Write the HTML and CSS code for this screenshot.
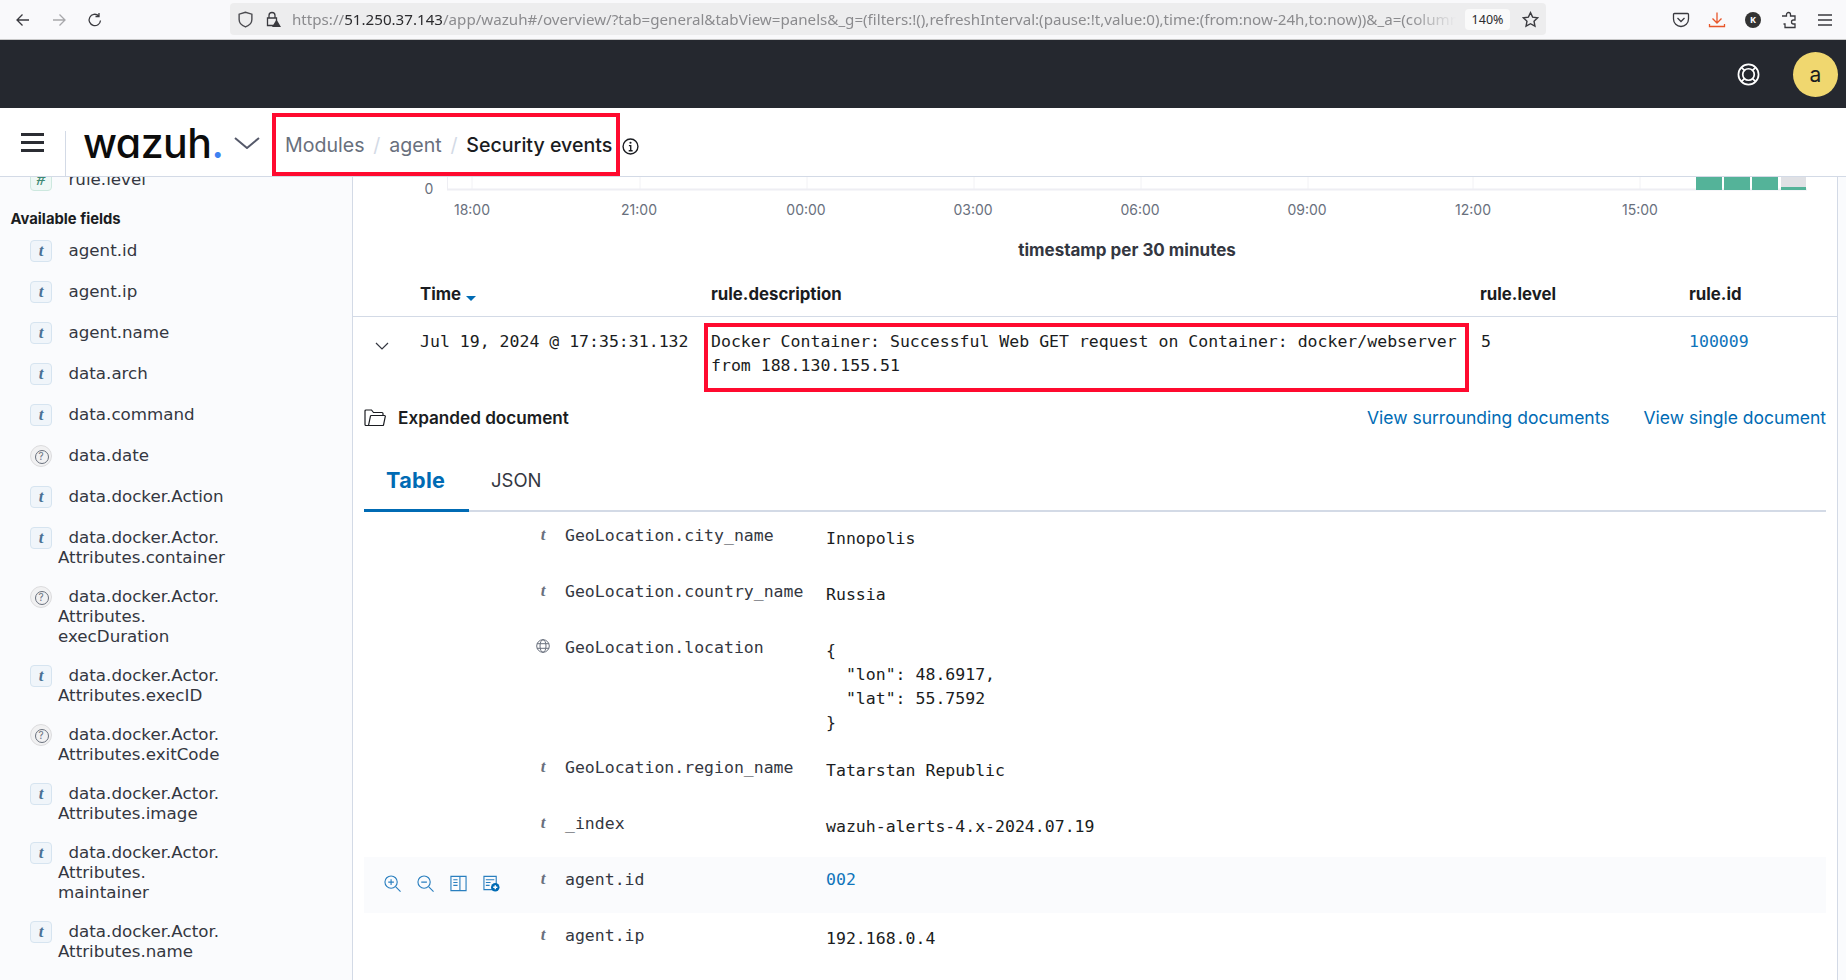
FILE: index.html
```html
<!DOCTYPE html>
<html lang="en">
<head>
<meta charset="utf-8">
<title>Wazuh - Security events</title>
<link rel="stylesheet" href="styles.css">
</head>
<body>
<div class="browser">
  <div class="browser-nav">
    <svg class="bi" viewBox="0 0 16 16"><path d="M14 8H2.5M7.5 2.5 2 8l5.500 5.500"/></svg>
    <svg class="bi dim" viewBox="0 0 16 16"><path d="M2 8h11.500M8.500 2.500 14 8l-5.500 5.500"/></svg>
    <svg class="bi" viewBox="0 0 16 16"><path d="M13.500 8.500A5.700 5.700 0 1 1 11.500 3.600M12 1v3.500H8.500"/></svg>
  </div>
  <div class="urlbar">
    <svg class="bi shield" viewBox="0 0 16 16"><path d="M8 1.200 2 3v5c0 3.500 2.800 5.800 6 7 3.200-1.200 6-3.500 6-7V3z"/></svg>
    <svg class="bi lock" viewBox="0 0 16 16"><path d="M4 7V4.500a3 3 0 0 1 6 0V7M2.500 7h9v7.500h-9z"/><path class="warn" d="M11.500 8.500 16 16H7z"/></svg>
    <div class="url"><span>https://</span><b>51.250.37.143</b><span>/app/wazuh#/overview/?tab=general&amp;tabView=panels&amp;_g=(filters:!(),refreshInterval:(pause:!t,value:0),time:(from:now-24h,to:now))&amp;_a=(columns</span></div>
    <div class="zoompill">140%</div>
    <svg class="bi star" viewBox="0 0 16 16"><path d="m8 1.500 2 4.300 4.700.6-3.400 3.200.9 4.700L8 12l-4.200 2.300.9-4.700L1.300 6.400 6 5.800z"/></svg>
  </div>
  <div class="browser-tools">
    <svg class="bi" viewBox="0 0 18 18"><path d="M2.500 2.500h13a1 1 0 0 1 1 1V8a7.500 7.500 0 0 1-15 0V3.500a1 1 0 0 1 1-1z"/><path d="m5.500 7 3.500 3.500L12.500 7"/></svg>
    <svg class="bi orange" viewBox="0 0 18 18"><path d="M9 1.500V12M4.500 7.500 9 12l4.500-4.500M1.500 13v2.500h15V13"/></svg>
    <div class="kbadge">K</div>
    <svg class="bi" viewBox="0 0 18 18"><path d="M2 5h4.500V3.500a2 2 0 0 1 4 0V5H15v4h-1.500a2 2 0 0 0 0 4H15v3.500H5V13H3.500"/></svg>
    <svg class="bi" viewBox="0 0 18 18"><path d="M2 4h14M2 9h14M2 14h14"/></svg>
  </div>
</div>

<header class="darkbar">
  <svg class="buoy" viewBox="0 0 24 24"><circle cx="12" cy="12" r="10.500"/><circle cx="12" cy="12" r="6"/><path d="m4.500 4.500 3.300 3.300M19.500 4.500l-3.300 3.300M4.500 19.500l3.300-3.300M19.500 19.500l-3.300-3.300"/></svg>
  <div class="avatar">a</div>
</header>

<nav class="appnav">
  <div class="menu-toggle"><span></span><span></span><span></span></div>
  <div class="logo">wazuh<i>.</i></div>
  <svg class="logo-chev" viewBox="0 0 26 12"><path d="M1 1l12 10L25 1"/></svg>
  <div class="crumbs">
    <span>Modules</span><em>/</em><span>agent</span><em>/</em><strong>Security events</strong>
  </div>
  <svg class="info" viewBox="0 0 16 16"><circle cx="8" cy="8" r="7"/><path d="M6.500 7.200H8.200V12M6.300 12h3.700"/><circle class="dot" cx="8" cy="4.500" r="1"/></svg>
</nav>

<div class="workspace">
  <aside class="sidebar">
    <div class="fields">
      <div class="field"><span class="ico num">#</span><span class="fname">rule.level</span></div>
      <h3 class="fields-title">Available fields</h3>
      <div class="field"><span class="ico str">t</span><span class="fname">agent.id</span></div>
      <div class="field"><span class="ico str">t</span><span class="fname">agent.ip</span></div>
      <div class="field"><span class="ico str">t</span><span class="fname">agent.name</span></div>
      <div class="field"><span class="ico str">t</span><span class="fname">data.arch</span></div>
      <div class="field"><span class="ico str">t</span><span class="fname">data.command</span></div>
      <div class="field"><span class="ico unk">?</span><span class="fname">data.date</span></div>
      <div class="field"><span class="ico str">t</span><span class="fname">data.docker.Action</span></div>
      <div class="field"><span class="ico str">t</span><span class="fname">data.docker.Actor.<br>Attributes.container</span></div>
      <div class="field"><span class="ico unk">?</span><span class="fname">data.docker.Actor.<br>Attributes.<br>execDuration</span></div>
      <div class="field"><span class="ico str">t</span><span class="fname">data.docker.Actor.<br>Attributes.execID</span></div>
      <div class="field"><span class="ico unk">?</span><span class="fname">data.docker.Actor.<br>Attributes.exitCode</span></div>
      <div class="field"><span class="ico str">t</span><span class="fname">data.docker.Actor.<br>Attributes.image</span></div>
      <div class="field"><span class="ico str">t</span><span class="fname">data.docker.Actor.<br>Attributes.<br>maintainer</span></div>
      <div class="field"><span class="ico str">t</span><span class="fname">data.docker.Actor.<br>Attributes.name</span></div>
      <div class="field"><span class="ico unk">?</span><span class="fname"></span></div>
    </div>
  </aside>

  <main class="main">
    <svg class="chart" viewBox="0 0 1484 85" width="1484" height="85">
      <path class="grid" d="M119 0v12M287 0v12M454 0v12M621 0v12M788 0v12M955 0v12M1120 0v12M1287 0v12"/>
      <path class="axis-y" d="M94.500 0v13"/>
      <path class="axis" d="M94 12.500h1360"/>
      <g class="bars">
        <rect x="1343" y="0" width="26" height="13"/>
        <rect x="1371" y="0" width="26" height="13"/>
        <rect x="1399" y="0" width="26" height="13"/>
        <rect class="barmute" x="1428" y="0" width="25" height="10"/>
        <rect x="1428" y="10" width="25" height="3"/>
      </g>
      <text class="tick" x="76" y="17" text-anchor="middle">0</text>
      <g class="ticks" text-anchor="middle">
        <text class="tick" x="119" y="38">18:00</text>
        <text class="tick" x="286" y="38">21:00</text>
        <text class="tick" x="453" y="38">00:00</text>
        <text class="tick" x="620" y="38">03:00</text>
        <text class="tick" x="787" y="38">06:00</text>
        <text class="tick" x="954" y="38">09:00</text>
        <text class="tick" x="1120" y="38">12:00</text>
        <text class="tick" x="1287" y="38">15:00</text>
      </g>
      <text class="axis-title" x="774" y="79" text-anchor="middle">timestamp per 30 minutes</text>
    </svg>

    <div class="thead">
      <div class="th">Time <span class="sort"></span></div>
      <div class="th">rule.description</div>
      <div class="th">rule.level</div>
      <div class="th">rule.id</div>
    </div>
    <div class="trow">
      <svg class="row-chev" viewBox="0 0 14 8"><path d="m1 1 6 6 6-6"/></svg>
      <div class="mono">Jul 19, 2024 @ 17:35:31.132</div>
      <div class="mono descbox">Docker Container: Successful Web GET request on Container: docker/webserver from 188.130.155.51</div>
      <div class="mono">5</div>
      <div class="mono link">100009</div>
    </div>

    <section class="doc">
      <div class="doc-head">
        <svg class="folder" viewBox="0 0 22 18"><path d="M4.500 16.500H2a1 1 0 0 1-1-1V2a1 1 0 0 1 1-1h5.500l2 2.500H18a1 1 0 0 1 1 1V6.500M4.500 16.500 6.500 7a.8.800 0 0 1 .8-.5H20.500a.8.800 0 0 1 .8 1L19.500 16a.8.800 0 0 1-.8.500z"/></svg>
        <strong class="doc-title">Expanded document</strong>
        <a class="doc-link">View surrounding documents</a>
        <a class="doc-link">View single document</a>
      </div>
      <div class="tabs">
        <div class="tab active">Table</div>
        <div class="tab">JSON</div>
      </div>
      <div class="kv">
        <div class="actions"></div><div class="type">t</div><div class="key">GeoLocation.city_name</div><div class="val">Innopolis</div>
      </div>
      <div class="kv">
        <div class="actions"></div><div class="type">t</div><div class="key">GeoLocation.country_name</div><div class="val">Russia</div>
      </div>
      <div class="kv tall">
        <div class="actions"></div>
        <div class="type"><svg class="globe" viewBox="0 0 14 14"><circle cx="7" cy="7" r="6.300"/><ellipse cx="7" cy="7" rx="3" ry="6.300"/><path d="M1 4.700h12M1 9.300h12"/></svg></div>
        <div class="key">GeoLocation.location</div>
        <div class="val"><pre class="json">{
  "lon": 48.6917,
  "lat": 55.7592
}</pre></div>
      </div>
      <div class="kv">
        <div class="actions"></div><div class="type">t</div><div class="key">GeoLocation.region_name</div><div class="val">Tatarstan Republic</div>
      </div>
      <div class="kv">
        <div class="actions"></div><div class="type">t</div><div class="key">_index</div><div class="val">wazuh-alerts-4.x-2024.07.19</div>
      </div>
      <div class="kv hover">
        <div class="actions">
          <svg class="act" viewBox="0 0 18 18"><circle cx="7.500" cy="7.500" r="6.500"/><path d="m12.500 12.500 5 5M7.500 4.500v6M4.500 7.500h6"/></svg>
          <svg class="act" viewBox="0 0 18 18"><circle cx="7.500" cy="7.500" r="6.500"/><path d="m12.500 12.500 5 5M4.500 7.500h6"/></svg>
          <svg class="act" viewBox="0 0 18 18"><path d="M1 1.500h16v15H1zM10.500 1.500v15M3.500 5h4.500M3.500 8h4.500M3.500 11h4.500"/></svg>
          <svg class="act" viewBox="0 0 18 18"><path d="M1 1.500h13v14H1zM3 5h9M3 8h5M3 11h4"/><circle class="fillc" cx="13" cy="13" r="4.500"/><path class="plus" d="M13 10.800v4.400M10.800 13h4.400"/></svg>
        </div>
        <div class="type">t</div><div class="key">agent.id</div><div class="val link">002</div>
      </div>
      <div class="kv">
        <div class="actions"></div><div class="type">t</div><div class="key">agent.ip</div><div class="val">192.168.0.4</div>
      </div>
    </section>
  </main>
</div>
</body>
</html>
```

FILE: styles.css
```css
* { box-sizing: border-box; }
html, body { margin: 0; padding: 0; height: 100%; overflow: hidden; background: #fff; }
body { font-family: "Inter", "Liberation Sans", sans-serif; color: #1a1c21; }

/* browser chrome */
.browser { height: 40px; background: #f9f9fb; border-bottom: 1px solid #c8c8c8; display: flex; align-items: center; }
.bi { width: 16px; height: 16px; fill: none; stroke: #3a3a3f; stroke-width: 1.3; flex: none; }
.bi.dim { stroke: #a8a8ab; }
.bi.orange { stroke: #e8562a; }
.browser-nav { display: flex; gap: 20px; padding-left: 15px; width: 230px; flex: none; }
.urlbar { width: 1316px; height: 32px; flex: none; margin-top: -1px; background: #ededee; border-radius: 4px; display: flex; align-items: center; padding-left: 7px; }
.urlbar .shield { stroke: #4a4a4f; width: 17px; height: 17px; }
.urlbar .lock { margin-left: 11px; }
.lock .warn { fill: #3a3a3f; stroke: none; }
.url { margin-left: 11px; width: 1164px; flex: none; white-space: nowrap; overflow: hidden; font-family: "Noto Sans", sans-serif; font-size: 15.150px; color: #8b8b8e; -webkit-mask-image: linear-gradient(to right, #000 96%, transparent); mask-image: linear-gradient(to right, #000 96%, transparent); }
.url b { font-weight: 400; color: #2b2b2e; }
.zoompill { margin-left: 9px; width: 45px; height: 21px; flex: none; background: #fafafa; border-radius: 4px; font-family: "Noto Sans", sans-serif; font-size: 12.500px; line-height: 21px; text-align: center; color: #2b2b2e; }
.urlbar .star { margin-left: 12px; width: 17px; height: 17px; }
.browser-tools { display: flex; align-items: center; gap: 18px; margin-left: 126px; }
.browser-tools .bi { width: 18px; height: 18px; }
.kbadge { width: 16px; height: 16px; margin: 0 1px; flex: none; border-radius: 50%; background: #333; color: #fff; font: 700 9px/16px "Noto Sans", sans-serif; text-align: center; }

/* dark header */
.darkbar { height: 68px; background: #25282f; display: flex; align-items: center; justify-content: flex-end; padding-right: 8px; }
.buoy { width: 23px; height: 23px; fill: none; stroke: #fff; stroke-width: 1.800; margin-right: 33px; }
.avatar { width: 45px; height: 45px; border-radius: 50%; background: #f0d76f; color: #1a1c21; font: 400 21px/45px "Inter", sans-serif; text-align: center; }

/* app nav */
.appnav { height: 69px; border-bottom: 1px solid #d3dae6; background: #fff; display: flex; align-items: flex-start; padding-top: 5px; }
.menu-toggle { width: 66px; height: 63px; padding: 20px 22px 0 21px; display: flex; flex-direction: column; gap: 5px; position: relative; flex: none; }
.menu-toggle span { display: block; height: 3px; background: #2b2d33; }
.menu-toggle::after { content: ""; position: absolute; right: 0; top: 18px; bottom: 0; width: 1px; background: #d3dae6; }
.logo { margin-left: 17px; margin-top: 5px; width: 151px; flex: none; font-size: 41px; line-height: 50px; font-weight: 500; letter-spacing: -0.500px; color: #0c0c0c; font-feature-settings: "cv11"; }
.logo i { font-style: normal; color: #3d82f1; }
.logo-chev { width: 26px; height: 12px; fill: none; stroke: #55596a; stroke-width: 2; flex: none; margin-top: 24px; }
.crumbs { margin-left: 12px; width: 348px; height: 63px; flex: none; border: 4px solid #ff0a2f; padding: 0 0 0 9px; display: flex; align-items: center; white-space: nowrap; font-size: 19.600px; color: #69707d; }
.crumbs em { font-style: normal; color: #d3dae6; margin: 0 8.800px; }
.crumbs strong { font-weight: 500; color: #1a1c21; }
.info { width: 17px; height: 17px; margin-left: 2px; margin-top: 25px; flex: none; fill: none; stroke: #1a1c21; stroke-width: 1.300; }
.info .dot { fill: #1a1c21; stroke: none; }

/* layout */
.workspace { display: flex; height: 803px; background: #fafbfd; overflow: hidden; }
.sidebar { width: 353px; flex: none; border-right: 1px solid #d3dae6; background: #fafbfd; overflow: hidden; }
.fields { margin-top: -8px; }
.field { display: flex; gap: 6px; padding-left: 30px; margin-bottom: 19px; }
.field:first-child { margin-bottom: 0; }
.ico { width: 22px; height: 22px; flex: none; border-radius: 4px; font: italic 700 17px/20px "Liberation Serif", serif; text-align: center; border: 1px solid #d6e4f0; background: #f0f5fa; color: #4a7194; }
.ico.num { background: #eef8f5; border-color: #cde8df; color: #3f8a73; }
.ico.unk { border-radius: 50%; border-color: #dcdcde; background: #f1f1f2; color: #69707d; font: 400 10px/20px "Inter", sans-serif; position: relative; }
.ico.unk::after { content: ""; position: absolute; left: 4px; top: 4px; width: 12px; height: 12px; border: 1px solid #69707d; border-radius: 50%; }
.fname { font-family: "DejaVu Sans", sans-serif; font-size: 16.700px; line-height: 20px; color: #343741; text-indent: 10.500px; margin: -0.500px 0 0.500px; }
.fields-title { margin: 18px 0 11px 10.500px; font-size: 14.800px; line-height: 20px; font-weight: 700; color: #1a1c21; }

.main { width: 1485px; flex: none; background: #fff; border-right: 1px solid #d3dae6; }
.chart { display: block; }
.chart .grid { stroke: #f2f2f5; fill: none; }
.chart .axis { stroke: #eeeef3; stroke-width: 2; fill: none; }
.chart .axis-y { stroke: #eeeef3; fill: none; }
.chart .bars { fill: #54b399; }
.chart .barmute { fill: #e0e1e5; }
.chart .tick { font-family: "Inter", sans-serif; font-size: 14px; fill: #69707d; }
.chart .axis-title { font-family: "Inter", sans-serif; font-size: 17px; font-weight: 700; fill: #343741; }

.thead { height: 55px; border-bottom: 1px solid #d3dae6; display: grid; grid-template-columns: 291px 769px 209px 1fr; padding: 22px 0 0 67px; }
.th { font-size: 16.800px; font-weight: 700; line-height: 20px; color: #1a1c21; }
.sort { display: inline-block; width: 0; height: 0; margin-left: 1px; vertical-align: -1px; border: 5px solid transparent; border-bottom: 0; border-top: 5px solid #006bb4; }
.trow { display: grid; grid-template-columns: 67px 284px 765px 220px 1fr; padding-top: 6px; height: 75px; }
.row-chev { width: 14px; height: 8px; margin: 19px 0 0 22px; fill: none; stroke: #343741; stroke-width: 1.200; }
.mono { font-family: "DejaVu Sans Mono", monospace; font-size: 16.530px; line-height: 24px; color: #1a1c21; padding-top: 7px; }
.trow .descbox { border: 4px solid #ff0a2f; height: 69px; padding: 3px 3px 0; }
.trow .descbox + .mono { padding-left: 12px; }
.link, .doc-link { color: #006bb4; }
.val.link, .mono.link { color: #0f74ba; }

.doc { padding: 0 11px; }
.doc-head { display: flex; align-items: center; height: 24px; margin-top: 14px; }
.folder { width: 22px; height: 18px; fill: none; stroke: #1a1c21; stroke-width: 1.200; flex: none; }
.doc-title { margin-left: 12px; margin-right: auto; font-size: 17.150px; font-weight: 600; line-height: 24px; }
.doc-link { font-size: 17.500px; font-weight: 400; line-height: 24px; margin-left: 34px; }
.tabs { display: flex; height: 62px; margin-top: 20px; margin-bottom: 1px; border-bottom: 2px solid #d3dae6; }
.tab { padding: 0 22px; height: 62px; font-size: 18.500px; line-height: 60px; color: #343741; }
.tab.active { border-bottom: 3px solid #006bb4; color: #006bb4; font-size: 21.600px; letter-spacing: 0.300px; font-weight: 700; width: 105px; }

.kv { display: grid; grid-template-columns: 170px 31px 261px 1fr; min-height: 56px; }
.kv.tall { height: 120px; }
.kv.hover { background: #fafbfd; }
.actions { display: flex; gap: 16px; padding: 18px 0 0 20px; }
.act { width: 17px; height: 17px; flex: none; fill: none; stroke: #2a7fbf; stroke-width: 1.200; overflow: visible; }
.act .fillc { fill: #006bb4; stroke: none; }
.act .plus { stroke: #fff; stroke-width: 1.500; }
.type { padding-top: 12px; width: 18px; text-align: center; font: italic 700 17px/20px "Liberation Serif", serif; color: #69707d; }
.globe { width: 14px; height: 14px; fill: none; stroke: #69707d; stroke-width: 1; vertical-align: -1px; }
.key { padding-top: 13px; font-family: "DejaVu Sans Mono", monospace; font-size: 16.500px; line-height: 20px; color: #343741; }
.val { padding-top: 14px; font-family: "DejaVu Sans Mono", monospace; font-size: 16.530px; line-height: 24px; color: #1a1c21; }
.val.link { padding-top: 11px; }
.json { margin: 0; font: inherit; }
```
